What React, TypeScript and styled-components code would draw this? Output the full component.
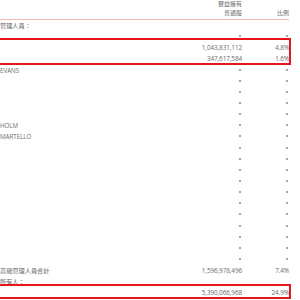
import styled, { createGlobalStyle } from "styled-components";

const Global = createGlobalStyle`
    body {
        margin: 0;
        background: #ffffff;
        overflow: hidden;
    }
`;

const Page = styled.div`
    width: 300px;
    height: 300px;
    overflow: hidden;
    background: #ffffff;
    color: #6b6b6b;
    font-family: "Open Sans", "Noto Sans CJK TC", sans-serif;
`;

const Table = styled.div`
    width: 289px;
`;

const Header = styled.div`
    display: grid;
    grid-template-columns: 1fr 60px 47px;
    border-bottom: 1px solid #f3bfab;
    font-family: "Noto Sans CJK TC", sans-serif;
    font-size: 6px;
`;

const HeadCell = styled.div`
    text-align: right;
    white-space: nowrap;
`;

const HeadLine = styled.div<{ $h: number }>`
    height: ${(p) => p.$h}px;
    line-height: ${(p) => p.$h}px;
`;

const Row = styled.div`
    display: grid;
    grid-template-columns: 1fr 60px 47px;
    height: 11.15px;
    line-height: 11.15px;
    font-size: 6.4px;
`;

const Name = styled.div`
    white-space: nowrap;
    font-family: "Open Sans", "Noto Sans CJK TC", sans-serif;
    font-size: 6.2px;
`;

const Value = styled.div`
    text-align: right;
    white-space: nowrap;
    letter-spacing: -0.1px;
`;

const Dot = styled.span`
    display: inline-block;
    width: 2px;
    height: 2px;
    margin-right: 1px;
    background: #a8a8a8;
    vertical-align: 2px;
`;

const Boxed = styled.div<{ $top: number; $bottom: number }>`
    position: relative;

    &::after {
        content: "";
        position: absolute;
        left: -4px;
        right: -2px;
        top: ${(p) => p.$top}px;
        bottom: ${(p) => p.$bottom}px;
        border: 2px solid #e5161d;
        pointer-events: none;
    }
`;

type RowData = { name?: string; shares?: string; pct?: string; dots?: boolean };

const rows: RowData[] = [
    { name: "管理人員：" },
    { dots: true },
    { shares: "1,043,831,112", pct: "4.8%" },
    { shares: "347,617,584", pct: "1.6%" },
    { name: "EVANS", dots: true },
    { dots: true },
    { dots: true },
    { dots: true },
    { dots: true },
    { name: "HOLM", dots: true },
    { name: "MARTELLO", dots: true },
    ...Array.from({ length: 11 }, () => ({ dots: true })),
    { name: "高級管理人員合計", shares: "1,596,978,496", pct: "7.4%" },
    { name: "所有人：" },
    { shares: "5,390,066,968", pct: "24.9%" },
];

function TableRow({ r }: { r: RowData }) {
    return (
        <Row>
            <Name>{r.name}</Name>
            <Value>{r.dots ? <Dot /> : r.shares}</Value>
            <Value>{r.dots ? <Dot /> : r.pct}</Value>
        </Row>
    );
}

export default function App() {
    return (
        <Page>
            <Global />
            <Table>
                <Header>
                    <div />
                    <HeadCell>
                        <HeadLine $h={7}>實益擁有</HeadLine>
                        <HeadLine $h={12}>普通股</HeadLine>
                    </HeadCell>
                    <HeadCell>
                        <HeadLine $h={7} />
                        <HeadLine $h={12}>比例</HeadLine>
                    </HeadCell>
                </Header>
                <TableRow r={rows[0]} />
                <TableRow r={rows[1]} />
                <Boxed $top={-4} $bottom={0}>
                    <TableRow r={rows[2]} />
                    <TableRow r={rows[3]} />
                </Boxed>
                {rows.slice(4, 24).map((r, i) => (
                    <TableRow key={i} r={r} />
                ))}
                <Boxed $top={-3} $bottom={0}>
                    <TableRow r={rows[24]} />
                </Boxed>
            </Table>
        </Page>
    );
}
